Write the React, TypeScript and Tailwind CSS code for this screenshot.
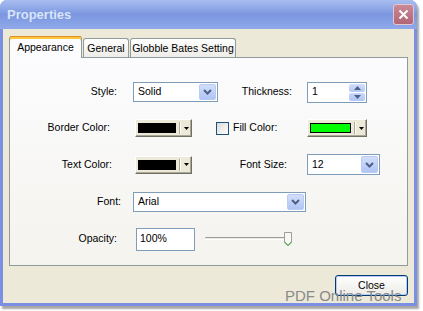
import React from 'react';

const font = { fontFamily: '"Liberation Sans", Arial, sans-serif' };

function DropArrow() {
  return (
    <div className="flex h-full w-[17px] items-center justify-center rounded-[2px] border border-[#B9CBF3] bg-gradient-to-b from-[#D2DEFB] to-[#B0C5F5]">
      <svg width="9" height="6" viewBox="0 0 9 6">
        <path d="M1 1 L4.5 4.5 L8 1" fill="none" stroke="#4D6185" strokeWidth="2" />
      </svg>
    </div>
  );
}

function Select({ value, className }: { value: string; className: string }) {
  return (
    <div className={`flex items-center border border-[#7F9DB9] bg-white p-px ${className}`}>
      <span className="flex-1 pl-[3px] text-black">{value}</span>
      <DropArrow />
    </div>
  );
}

function Spin({ value }: { value: string }) {
  return (
    <div className="flex h-[21px] w-[60px] items-center border border-[#7F9DB9] bg-white p-px">
      <span className="flex-1 pl-[3px]">{value}</span>
      <div className="flex h-full w-[16px] flex-col gap-px">
        <div className="flex flex-1 items-center justify-center rounded-[2px] bg-gradient-to-b from-[#D2DEFB] to-[#B4C8F6]">
          <svg width="7" height="4" viewBox="0 0 7 4">
            <path d="M0 4 L3.5 0 L7 4 Z" fill="#4D6185" />
          </svg>
        </div>
        <div className="flex flex-1 items-center justify-center rounded-[2px] bg-gradient-to-b from-[#C8D7FA] to-[#B0C5F5]">
          <svg width="7" height="4" viewBox="0 0 7 4">
            <path d="M0 0 L3.5 4 L7 0 Z" fill="#4D6185" />
          </svg>
        </div>
      </div>
    </div>
  );
}

function ColorButton({ color, className }: { color: string; className: string }) {
  return (
    <div
      className={`flex h-[18px] items-center border border-t-white border-l-white border-r-[#716F64] border-b-[#716F64] bg-[#ECE9D8] shadow-[inset_-1px_-1px_0_#ACA899] ${className}`}
    >
      <div className="ml-[2px] h-[10px] flex-1 border border-black" style={{ backgroundColor: color }} />
      <div className="ml-[3px] h-[12px] w-[2px] border-l border-l-[#ACA899] border-r border-r-white" />
      <div className="flex w-[10px] items-center justify-center">
        <svg width="5" height="3" viewBox="0 0 5 3">
          <path d="M0 0 L5 0 L2.5 3 Z" fill="#000" />
        </svg>
      </div>
    </div>
  );
}

export default function App() {
  return (
    <div className="h-[311px] w-[423px] bg-white text-[10.5px] text-black" style={font}>
      <div className="flex h-[306px] w-[417px] flex-col rounded-t-[7px] bg-[#7B8FE3] shadow-[2px_3px_2px_rgba(0,0,0,0.35)]">
        {/* title bar */}
        <div className="flex h-[29px] items-center rounded-t-[7px] bg-gradient-to-b from-[#A9BEF0] via-[#7C97E0] to-[#8FA9EA] pl-[7px] pr-[3px]">
          <span className="flex-1 text-[13px] font-bold text-[#D8E4F8]">Properties</span>
          <div className="flex h-[21px] w-[21px] items-center justify-center rounded-[3px] border border-[#E2C6D0] bg-gradient-to-b from-[#C98A98] to-[#B26576]">
            <svg width="11" height="11" viewBox="0 0 11 11">
              <path d="M1.5 1.5 L9.5 9.5 M9.5 1.5 L1.5 9.5" stroke="#fff" strokeWidth="2" />
            </svg>
          </div>
        </div>

        {/* body */}
        <div className="relative mx-[3px] mb-[3px] flex flex-1 flex-col bg-[#ECE9D8] pl-[6px] pt-[7px]">
          {/* tabs */}
          <div className="flex h-[22px] items-end gap-px">
            <div className="relative z-10 flex h-[22px] w-[73px] items-center justify-center rounded-t-[3px] border-x border-[#919B9C] bg-[#FCFCFE] shadow-[inset_0_3px_0_#FFC73C]">
              <div className="absolute left-0 right-0 top-0 h-px bg-[#E68B2C]" />
              <span className="mt-[1px]">Appearance</span>
            </div>
            <div className="flex h-[20px] w-[46px] items-center justify-center rounded-t-[3px] border border-b-0 border-[#919B9C] bg-gradient-to-b from-white to-[#ECEBE6]">
              General
            </div>
            <div className="flex h-[20px] w-[106px] items-center justify-center rounded-t-[3px] border border-b-0 border-[#919B9C] bg-gradient-to-b from-white to-[#ECEBE6]">
              Globble Bates Setting
            </div>
          </div>

          {/* panel */}
          <div className="-mt-px flex h-[209px] w-[399px] flex-col border border-[#919B9C] bg-gradient-to-b from-[#FCFCFE] to-[#F4F3EE] pt-[16px]">
            <div className="flex h-[36px] items-center">
              <span className="w-[107px] text-right">Style:</span>
              <Select value="Solid" className="ml-[16px] h-[20px] w-[85px]" />
              <span className="w-[74px] text-right">Thickness:</span>
              <div className="ml-[15px]">
                <Spin value="1" />
              </div>
            </div>

            <div className="flex h-[36px] items-center">
              <span className="w-[100px] text-right">Border Color:</span>
              <ColorButton color="#000000" className="ml-[25px] w-[57px]" />
              <div className="ml-[24px] h-[13px] w-[13px] border border-[#1C5180] bg-gradient-to-br from-[#DCDBD4] to-white" />
              <span className="ml-[4px] w-[74px]">Fill Color:</span>
              <ColorButton color="#00FF00" className="w-[60px]" />
            </div>

            <div className="flex h-[37px] items-center">
              <span className="w-[102px] text-right">Text Color:</span>
              <ColorButton color="#000000" className="ml-[23px] w-[57px]" />
              <span className="w-[95px] text-right">Font Size:</span>
              <Select value="12" className="ml-[20px] h-[21px] w-[73px]" />
            </div>

            <div className="flex h-[38px] items-center">
              <span className="w-[111px] text-right">Font:</span>
              <Select value="Arial" className="ml-[12px] h-[20px] w-[173px]" />
            </div>

            <div className="flex h-[36px] items-center">
              <span className="w-[107px] text-right">Opacity:</span>
              <div className="ml-[19px] flex h-[23px] w-[59px] items-center border border-[#7F9DB9] bg-white pl-[3px]">
                100%
              </div>
              <div className="relative ml-[10px] h-[14px] w-[87px]">
                <div className="absolute left-0 top-[5px] h-[3px] w-[83px] rounded-[1px] border-t border-t-[#9D9C99] border-b border-b-white bg-[#ECEBE6]" />
                <svg className="absolute left-[79px] top-0" width="8" height="14" viewBox="0 0 8 14">
                  <path d="M0.5 0.5 H7.5 V10 L4 13.5 L0.5 10 Z" fill="#F7F7F4" stroke="#9D9C99" />
                  <path d="M0.5 10 L4 13.5 L7.5 10" fill="none" stroke="#21A121" />
                </svg>
              </div>
            </div>
          </div>

          {/* close button */}
          <div className="flex w-[399px] justify-end pt-[9px]">
            <div className="flex h-[21px] w-[73px] items-center justify-center rounded-[3px] border border-[#003C74] bg-gradient-to-b from-white to-[#ECEBE6] shadow-[inset_0_0_0_1px_#B5CCF8]">
              Close
            </div>
          </div>

          <span className="pointer-events-none absolute left-[282px] top-[256px] text-[15px] text-[#8A8A8A]">
            PDF Online Tools
          </span>
        </div>
      </div>
    </div>
  );
}
